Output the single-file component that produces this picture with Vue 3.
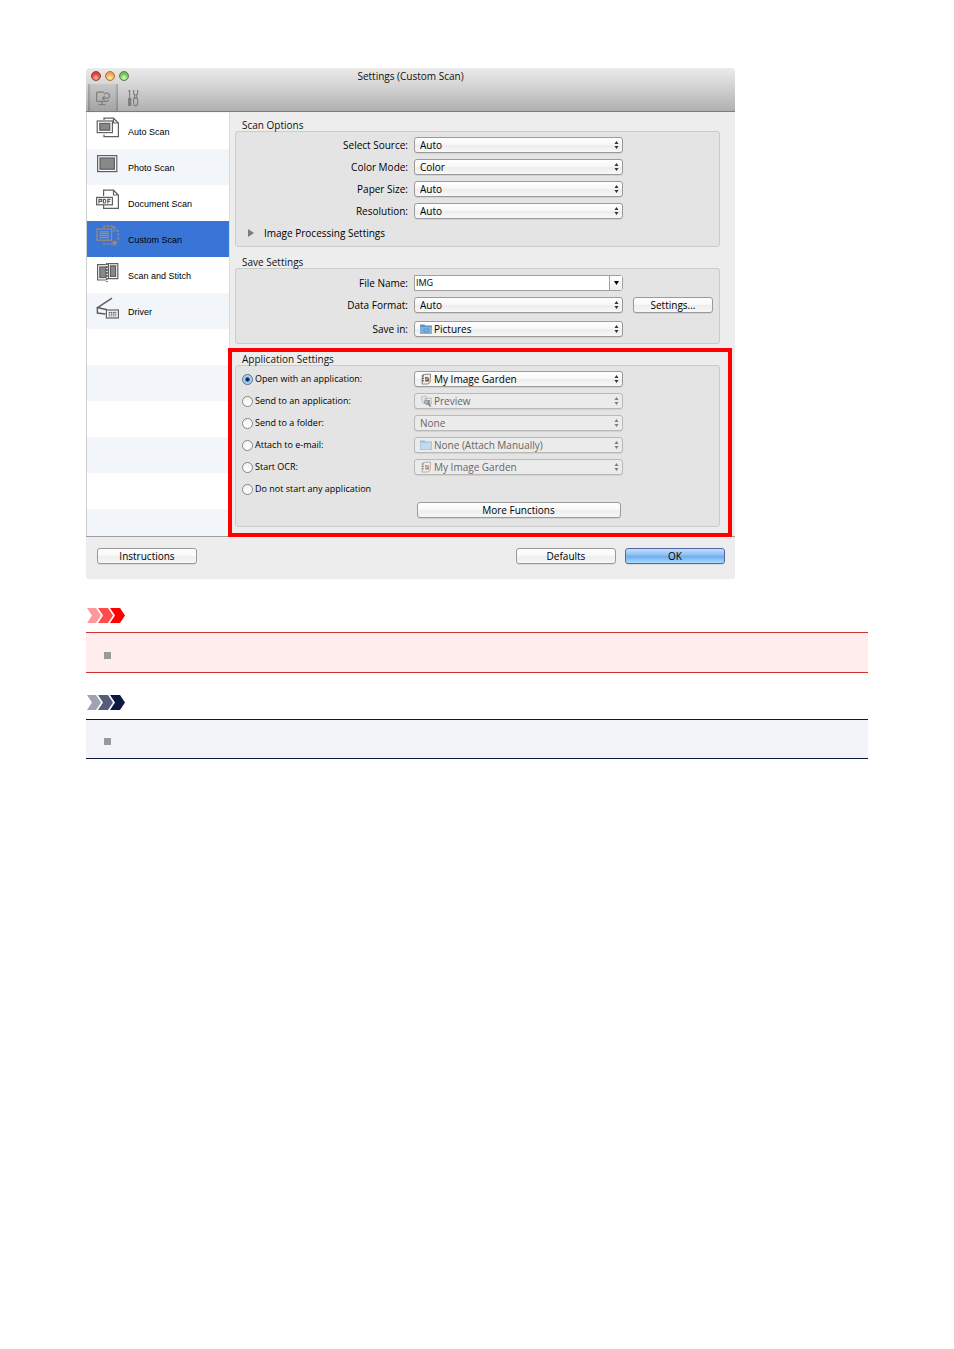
<template>
    <div class="page">
        <div class="window">
            <header class="title-bar">
                <div class="title-row">
                    <div class="lights">
                        <button class="light red" type="button" aria-label="Close"></button>
                        <button class="light amber" type="button" aria-label="Minimize"></button>
                        <button class="light green" type="button" aria-label="Zoom"></button>
                    </div>
                    <h1 class="title">Settings (Custom Scan)</h1>
                </div>
                <div class="toolbar">
                    <button class="tool active" type="button" aria-label="Scanning from the computer">
                        <svg width="16" height="16" viewBox="0 0 16 16" fill="none" stroke="#808080" stroke-width="1.2">
                            <path d="M9 2.2H2.6Q1.6 2.2 1.6 3.2V10.4Q1.6 11.4 2.6 11.4H12Q13 11.4 13 10.4V9.6" />
                            <path d="M7 11.4V14M3.5 14.6H10.5" />
                            <path d="M9 4.4Q10.6 2.4 12.8 3.2Q15 4.4 14.6 6.4Q14.2 8.2 12 8.2H7.6M9.8 5.8L7.4 8.2L9.8 10.4" />
                        </svg>
                    </button>
                    <button class="tool" type="button" aria-label="General settings">
                        <svg width="12" height="18" viewBox="0 0 12 18" fill="none" stroke="#808080" stroke-width="1.2">
                            <path d="M2.6 1V9M1.2 2.2L2.6 1.4" />
                            <path d="M1.6 9.6H3.8V16.4H1.6Z" fill="#808080" />
                            <path d="M6.6 1V4Q6.6 6 8.6 6Q10.6 6 10.6 4V1M7.4 6.4V8.6H9.8V6.4" />
                            <path d="M8.6 8.8Q6.6 8.8 6.6 11V14.4Q6.6 16.6 8.6 16.6Q10.6 16.6 10.6 14.4V11Q10.6 8.8 8.6 8.8Z" />
                        </svg>
                    </button>
                </div>
            </header>

            <div class="body">
                <nav class="sidebar">
                    <a v-for="tab in tabs" :key="tab.id" href="#" class="tab" :class="{ selected: tab.id === current }" @click.prevent="current = tab.id">
                        <svg class="tab-icon" width="24" height="24" viewBox="0 0 24 24" fill="none" stroke="currentColor" stroke-width="1.2">
                            <template v-if="tab.id === 'auto'">
                                <path d="M8 4V2.2H17.5L22.4 7V20.6H8V18.4M17.5 2.2V7H22.4" />
                                <rect x="1.2" y="5" width="15.2" height="11.6" />
                                <rect x="3.8" y="7.4" width="10" height="6.8" fill="#888" />
                            </template>
                            <template v-else-if="tab.id === 'photo'">
                                <rect x="1.6" y="3.6" width="19.2" height="16" />
                                <rect x="4" y="6" width="14.4" height="11.2" fill="#888" />
                            </template>
                            <template v-else-if="tab.id === 'document'">
                                <path d="M7.6 8V2.2H17.5L22.4 7V20.4H7.6V17M17.5 2.2V7H22.4" />
                                <rect x=".6" y="9.4" width="15.8" height="7.4" fill="#fff" />
                                <path d="M3 15.4V11.4H5.6V13.4H3.2M7.4 11.4H8.6Q9.8 11.4 9.8 13.2Q9.8 15 8.6 15H7.4ZM11.8 15.4V11.4H14.6M11.8 13.3H14.2" />
                            </template>
                            <template v-else-if="tab.id === 'custom'">
                                <path d="M8 4V2.2H17.5L22.2 7V16M8 18.4V20H16M17.5 2.2V7H22.2" stroke-dasharray="3 1" />
                                <rect x="1" y="5" width="14.6" height="11.2" />
                                <path d="M3.4 7.8H13.2M3.4 9.6H13.2M3.4 11.6H13.2M3.4 13.6H13.2" />
                                <path d="M18.6 15.4L19.4 17.8H22.4L20 19.4L20.9 22.2L18.6 20.6L16.3 22.2L17.2 19.4L14.8 17.8H17.8Z" fill="currentColor" stroke="none" />
                            </template>
                            <template v-else-if="tab.id === 'stitch'">
                                <path d="M9.8 4.6H1.6V20H9.8" />
                                <rect x="3.8" y="7" width="6" height="10.6" fill="#888" />
                                <path d="M12.4 3.6H21.8V18.6H12.4Z" />
                                <rect x="14.4" y="5.8" width="5.2" height="10.6" fill="#888" />
                                <path d="M10.8 3V22" stroke-width="1.8" stroke-dasharray="2 1" />
                            </template>
                            <template v-else>
                                <path d="M16 2.2L1.6 11.6L11 13.8M1.4 12V17L9.4 18" stroke-width="1.5" />
                                <rect x="10.4" y="14" width="12" height="8" fill="#fff" />
                                <path d="M12.6 16.4H20.4M12.6 18.2H20.4M12.6 20H20.4" stroke-dasharray="1.6 .6" />
                            </template>
                        </svg>
                        <span>{{ tab.label }}</span>
                    </a>
                </nav>

                <main class="content">
                    <section class="group">
                        <h2 class="group-title">Scan Options</h2>
                        <div class="box">
                            <div v-for="field in scanFields" :key="field.id" class="row">
                                <label class="name" :for="field.id">{{ field.label }}</label>
                                <div class="control">
                                    <select :id="field.id" class="popup">
                                        <option>{{ field.value }}</option>
                                    </select>
                                    <svg class="arrows" width="5" height="8" viewBox="0 0 5 8"><path d="M.5 3L2.5 0L4.5 3ZM.5 5L2.5 8L4.5 5Z" /></svg>
                                </div>
                            </div>
                            <button class="disclosure" type="button">
                                <svg width="6" height="8" viewBox="0 0 6 8"><path d="M0 0L6 4L0 8Z" fill="#7d7d7d" /></svg>
                                Image Processing Settings
                            </button>
                        </div>
                    </section>

                    <section class="group">
                        <h2 class="group-title">Save Settings</h2>
                        <div class="box save">
                            <div class="row">
                                <label class="name" for="file-name">File Name:</label>
                                <div class="control combo">
                                    <input id="file-name" v-model="fileName" class="combo-text" type="text">
                                    <button class="combo-open" type="button" aria-label="Recent names">
                                        <svg width="5" height="4" viewBox="0 0 5 4"><path d="M0 0H5L2.5 4Z" /></svg>
                                    </button>
                                </div>
                            </div>
                            <div class="row">
                                <label class="name" for="data-format">Data Format:</label>
                                <div class="control">
                                    <select id="data-format" class="popup">
                                        <option>Auto</option>
                                    </select>
                                    <svg class="arrows" width="5" height="8" viewBox="0 0 5 8"><path d="M.5 3L2.5 0L4.5 3ZM.5 5L2.5 8L4.5 5Z" /></svg>
                                </div>
                                <button class="push settings" type="button">Settings...</button>
                            </div>
                            <div class="row">
                                <label class="name" for="save-in">Save in:</label>
                                <div class="control">
                                    <select id="save-in" class="popup with-icon">
                                        <option>Pictures</option>
                                    </select>
                                    <svg class="app-icon" width="12" height="12" viewBox="0 0 12 12">
                                        <path d="M0 1.5H4.5L5.5 2.5H12V11H0Z" fill="#5f94c2" />
                                        <path d="M0 4H12V11H0Z" fill="#82b1d8" />
                                        <path d="M4 6H8.5V9H4Z" fill="none" stroke="#5f94c2" />
                                    </svg>
                                    <svg class="arrows" width="5" height="8" viewBox="0 0 5 8"><path d="M.5 3L2.5 0L4.5 3ZM.5 5L2.5 8L4.5 5Z" /></svg>
                                </div>
                            </div>
                        </div>
                    </section>

                    <section class="group highlighted">
                        <h2 class="group-title">Application Settings</h2>
                        <div class="box apps">
                            <div v-for="action in actions" :key="action.id" class="row">
                                <label class="choice">
                                    <input v-model="chosen" type="radio" name="action" :value="action.id">
                                    {{ action.label }}
                                </label>
                                <div v-if="action.value" class="control">
                                    <select class="popup" :class="{ 'with-icon': action.icon }" :aria-label="action.label" :disabled="chosen !== action.id">
                                        <option>{{ action.value }}</option>
                                    </select>
                                    <svg v-if="action.icon" class="app-icon" :class="{ dim: chosen !== action.id }" width="12" height="12" viewBox="0 0 12 12">
                                        <template v-if="action.icon === 'garden'">
                                            <path d="M3 1.5L10.5 1L10 9.5L7.5 11H2Z" fill="#f4f1ec" stroke="#8d8782" />
                                            <path d="M1.5 3H4M1.5 5.4H4M1.5 7.8H4" stroke="#555" />
                                            <path d="M5 4H9V8.6H5Z" fill="#8c5f4a" />
                                            <path d="M5 7L9 4.4" stroke="#d9c3b0" />
                                        </template>
                                        <template v-else-if="action.icon === 'preview'">
                                            <path d="M1 2L6 .8L8 6.8L3 8.4Z" fill="#d7e3ee" stroke="#8e9aa6" stroke-width=".8" />
                                            <path d="M5 3.6L11 3L11.4 9L6 9.6Z" fill="#eef2f6" stroke="#76818c" stroke-width=".8" />
                                            <circle cx="6.4" cy="7" r="2" fill="#7ba0c6" stroke="#444" stroke-width=".8" />
                                            <path d="M9 5V9.4M8 8.6L10.6 11.4" stroke="#333" stroke-width="1.4" />
                                        </template>
                                        <template v-else>
                                            <path d="M0 1.5H4.5L5.5 2.5H12V11H0Z" fill="#6f9fc4" />
                                            <path d="M.6 3.6H11.4V10.4H.6Z" fill="#a9d2ec" />
                                        </template>
                                    </svg>
                                    <svg class="arrows" :class="{ dim: chosen !== action.id }" width="5" height="8" viewBox="0 0 5 8"><path d="M.5 3L2.5 0L4.5 3ZM.5 5L2.5 8L4.5 5Z" /></svg>
                                </div>
                            </div>
                            <div class="row more">
                                <button class="push" type="button">More Functions</button>
                            </div>
                        </div>
                    </section>
                </main>
            </div>

            <footer class="footer">
                <button class="push" type="button">Instructions</button>
                <button class="push defaults" type="button">Defaults</button>
                <button class="push primary" type="button">OK</button>
            </footer>
        </div>

        <section v-for="note in notes" :key="note" class="note" :class="note">
            <svg width="39" height="15" viewBox="0 0 39 15">
                <path d="M1 0H10L15 7.5L10 15H1L6 7.5Z" opacity=".4" />
                <path d="M12 0H22L27 7.5L22 15H12L17 7.5Z" opacity=".7" />
                <path d="M24 0H34L39 7.5L34 15H24L29 7.5Z" />
            </svg>
            <ul class="note-list">
                <li></li>
            </ul>
        </section>
    </div>
</template>

<script setup>
import { ref } from 'vue';

const current = ref('custom')
const chosen = ref('open')
const fileName = ref('IMG')

const tabs = [
    { id: 'auto', label: 'Auto Scan' },
    { id: 'photo', label: 'Photo Scan' },
    { id: 'document', label: 'Document Scan' },
    { id: 'custom', label: 'Custom Scan' },
    { id: 'stitch', label: 'Scan and Stitch' },
    { id: 'driver', label: 'Driver' },
]

const scanFields = [
    { id: 'source', label: 'Select Source:', value: 'Auto' },
    { id: 'color-mode', label: 'Color Mode:', value: 'Color' },
    { id: 'paper-size', label: 'Paper Size:', value: 'Auto' },
    { id: 'resolution', label: 'Resolution:', value: 'Auto' },
]

const actions = [
    { id: 'open', label: 'Open with an application:', value: 'My Image Garden', icon: 'garden' },
    { id: 'send', label: 'Send to an application:', value: 'Preview', icon: 'preview' },
    { id: 'folder', label: 'Send to a folder:', value: 'None' },
    { id: 'mail', label: 'Attach to e-mail:', value: 'None (Attach Manually)', icon: 'folder' },
    { id: 'ocr', label: 'Start OCR:', value: 'My Image Garden', icon: 'garden' },
    { id: 'none', label: 'Do not start any application' },
]

const notes = ['important', 'info']
</script>

<style>
body {
    margin: 0;
    background: #fff;
}
</style>

<style scoped>
* {
    box-sizing: border-box;
}
.page {
    padding: 68px 86px;
    font-family: "Lucida Grande", "Open Sans", "Noto Sans", sans-serif;
    font-size: 10px;
    font-weight: 500;
    line-height: 12px;
    color: #000;
}
button, select, input {
    font: inherit;
    color: inherit;
    margin: 0;
}
svg {
    display: block;
    flex: none;
}
.window {
    max-width: 649px;
    background: #ededed;
    border-radius: 4px 4px 3px 3px;
}

/* title bar */
.title-bar {
    height: 44px;
    background: linear-gradient(#ebebeb, #d2d2d2 45%, #b0b0b0);
    border-bottom: 1px solid #7c7c7c;
    border-radius: 4px 4px 0 0;
}
.title-row {
    display: grid;
    grid-template-columns: 1fr auto 1fr;
    align-items: center;
    height: 16px;
    padding: 0 5px;
}
.lights {
    display: flex;
    gap: 4px;
}
.light {
    width: 10px;
    height: 10px;
    padding: 0;
    border: 1px solid #8a6a50;
    border-radius: 50%;
}
.red {
    background: radial-gradient(circle at 50% 75%, #ffb0a0, #dc4035 65%);
    border-color: #96382f;
}
.amber {
    background: radial-gradient(circle at 50% 75%, #ffeeb0, #f0a040 65%);
    border-color: #a8713a;
}
.green {
    background: radial-gradient(circle at 50% 75%, #d8ffb8, #6cbc50 65%);
    border-color: #4d8440;
}
.title {
    margin: 0;
    font-size: 10px;
    font-weight: 400;
    line-height: 16px;
    color: #111;
}
.toolbar {
    display: flex;
    height: 27px;
    padding-left: 2px;
}
.tool {
    display: flex;
    align-items: center;
    justify-content: center;
    width: 30px;
    padding: 0;
    border: 0;
    background: none;
}
.tool.active {
    background: linear-gradient(90deg, rgba(0, 0, 0, .25), rgba(0, 0, 0, .07) 10%, rgba(0, 0, 0, .07) 90%, rgba(0, 0, 0, .25));
}

.body {
    display: flex;
    border-bottom: 1px solid #9b9fa3;
}

/* scan types */
.sidebar {
    flex: none;
    width: 144px;
    padding-top: 1px;
    border-left: 1px solid #cfcfcf;
    border-right: 1px solid #dcdcdc;
    background: repeating-linear-gradient(#fff 0 36px, #f2f6fb 36px 72px) 0 1px;
    font-family: "Helvetica Neue", "Liberation Sans", Arial, sans-serif;
    font-size: 9px;
}
.tab {
    display: flex;
    gap: 8px;
    height: 36px;
    padding: 3px 0 0 9px;
    line-height: 32px;
    color: #000;
    text-decoration: none;
}
.tab-icon {
    color: #606060;
}
.tab.selected {
    background: #3875d7;
}
.selected .tab-icon {
    color: #a58a72;
}

/* groups */
.content {
    flex: 1;
    min-width: 0;
    padding-top: 7px;
}
.group {
    padding: 0 15px 0 5px;
    margin-bottom: 9px;
}
.group-title {
    margin: 0 0 0 7px;
    font-size: 10px;
    font-weight: 400;
    line-height: 12px;
    color: #111;
}
.box {
    padding: 2px 0;
    border: 1px solid #cbcbcb;
    border-radius: 3px;
    background: #e4e4e4;
}
.row {
    display: grid;
    grid-template-columns: 172px 209px 80px;
    align-items: center;
    height: 22px;
    column-gap: 6px;
}
.save {
    padding: 3px 0 1px;
}
.save .row:last-child {
    height: 26px;
}
.name {
    text-align: right;
}
.control {
    position: relative;
}
.popup {
    display: block;
    width: 100%;
    height: 16px;
    padding: 0 18px 0 5px;
    border: 1px solid #9a9a9a;
    border-radius: 3px;
    background: linear-gradient(#fff, #f6f6f6 50%, #ececec 51%, #f8f8f8);
    box-shadow: 0 1px 0 rgba(0, 0, 0, .08);
    appearance: none;
    line-height: 14px;
}
.popup.with-icon {
    padding-left: 19px;
}
.popup:disabled {
    border-color: #b9b9b9;
    background: #ebebeb;
    color: #666;
    opacity: 1;
}
.arrows {
    position: absolute;
    top: 4px;
    right: 4px;
    fill: #333;
    pointer-events: none;
}
.app-icon {
    position: absolute;
    top: 2px;
    left: 6px;
    pointer-events: none;
}
.dim {
    opacity: .6;
}
.disclosure {
    display: flex;
    align-items: center;
    gap: 10px;
    height: 22px;
    padding: 0 0 0 12px;
    border: 0;
    background: none;
}
.combo {
    display: flex;
    height: 16px;
    border: 1px solid #a0a0a0;
    border-radius: 0 3px 3px 0;
    background: #fff;
}
.combo-text {
    flex: 1;
    min-width: 0;
    padding: 0 1px;
    border: 0;
    background: none;
    font-size: 9px;
}
.combo-open {
    display: flex;
    align-items: center;
    justify-content: center;
    width: 13px;
    padding: 0;
    border: 0;
    border-left: 1px solid #a0a0a0;
    background: linear-gradient(#fff, #eee);
}
.push {
    width: 100px;
    height: 16px;
    padding: 0;
    border: 1px solid #9a9a9a;
    border-radius: 3px;
    background: linear-gradient(#fff, #f8f8f8 50%, #eee 51%, #f6f6f6);
    box-shadow: 0 1px 0 rgba(0, 0, 0, .08);
    line-height: 14px;
}
.push.settings {
    width: 80px;
    margin-left: 4px;
}

/* application settings, framed in red */
.highlighted {
    position: relative;
    margin: -5px 3px -1px -2px;
    padding: 1px 8px 6px 3px;
    border: 4px solid #f00;
}
.apps {
    padding: 2px 0 6px;
}
.choice {
    display: flex;
    align-items: center;
    gap: 2px;
    padding-left: 6px;
    font-size: 9px;
    white-space: nowrap;
}
.choice input {
    flex: none;
    width: 11px;
    height: 11px;
    border: 1px solid #858585;
    border-radius: 50%;
    background: linear-gradient(#f4f4f4, #fff);
    appearance: none;
}
.choice input:checked {
    border-color: #4a6f9c;
    background: radial-gradient(circle, #10203a 0 1px, #9fcbf3 3px, #d5ecff);
}
.more {
    height: 20px;
}
.more .push {
    grid-column: 2;
    justify-self: center;
    width: 204px;
}

.footer {
    display: flex;
    gap: 9px;
    height: 42px;
    padding: 11px 10px 0 11px;
}
.defaults {
    margin-left: auto;
}
.primary {
    border-color: #5566a8;
    background: linear-gradient(#c4defa, #8cbdf2 45%, #6cabee 50%, #a6dcfc);
}

/* notes below the window */
.note {
    margin-top: 22px;
}
.window + .note {
    margin-top: 29px;
}
.note-list {
    margin: 9px 0 0;
    padding: 19px 18px 13px;
    border: solid;
    border-width: 1px 0;
    list-style: none;
}
.note-list li {
    width: 7px;
    height: 7px;
    background: #999;
}
.important {
    fill: #f00;
}
.important .note-list {
    border-color: #cf3030;
    background: #ffeded;
}
.info {
    fill: #0c1840;
}
.info .note-list {
    padding-top: 18px;
    border-color: #0c1840;
    background: #f2f4fa;
}
</style>
